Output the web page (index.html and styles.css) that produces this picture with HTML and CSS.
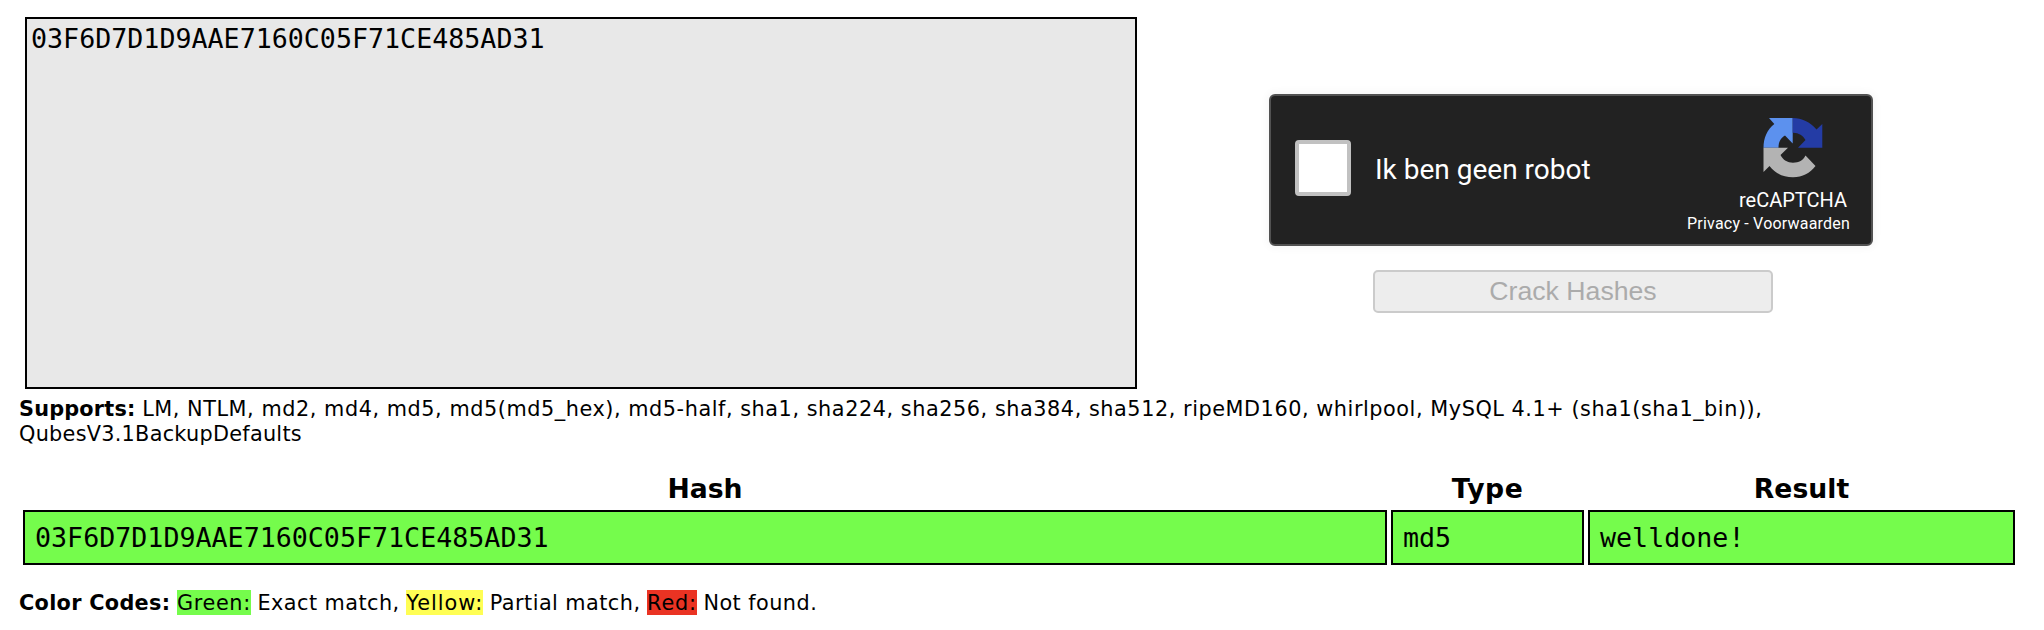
FILE: index.html
```html
<!DOCTYPE html>
<html lang="nl">
<head>
<meta charset="utf-8">
<title>Crack Hashes</title>
<link rel="stylesheet" href="styles.css">
</head>
<body>
<main class="page">
  <section class="entry">
    <div class="hash-input">03F6D7D1D9AAE7160C05F71CE485AD31</div>
    <div class="actions">
      <div class="captcha">
        <span class="checkbox"></span>
        <span class="captcha-label">Ik ben geen robot</span>
        <div class="brand">
          <svg class="logo" viewBox="0 0 60 60" width="60" height="60">
            <path fill="#5c91ee" d="M29.7 0H6l5.300 6C4 12 .5 20 .5 29.700H15.500C15.500 24 17.500 20 22 17.500L29.700 25.500Z"/>
            <path fill="#243ca5" d="M29.700 0C39 0 47 4 53.500 11.500L59.300 6V29.700H35L42.500 22C40 17.500 35.500 14.500 29.700 14.700Z"/>
            <path fill="#b3b3b3" d="M.5 29.700H25L17.500 37C20 42 24.500 44.700 30 44.700 36 44.700 40 42.500 42.500 37.500L52.500 48C47 55 39.500 59.300 30 59.300 20 59.300 12.500 55.500 6.500 48L.5 54Z"/>
          </svg>
          <span class="brand-name">reCAPTCHA</span>
          <span class="brand-links">Privacy - Voorwaarden</span>
        </div>
      </div>
      <button class="crack" disabled>Crack Hashes</button>
    </div>
  </section>
  <p class="supports"><b>Supports:</b> <span class="algorithms">LM, NTLM, md2, md4, md5, md5(md5_hex), md5-half, sha1, sha224, sha256, sha384, sha512, ripeMD160, whirlpool, MySQL 4.1+ (sha1(sha1_bin)),</span><br><span class="backup">QubesV3.1BackupDefaults</span></p>
  <div class="results">
    <div class="head">Hash</div><div class="head type">Type</div><div class="head">Result</div>
    <div class="cell">03F6D7D1D9AAE7160C05F71CE485AD31</div><div class="cell">md5</div><div class="cell">welldone!</div>
  </div>
  <p class="codes"><b>Color Codes:</b> <span class="swatch green">Green:</span> <span class="meaning">Exact match,</span> <span class="swatch yellow">Yellow:</span> <span class="meaning">Partial match,</span> <span class="swatch red">Red:</span> <span class="meaning">Not found.</span></p>
</main>
</body>
</html>
```
FILE: styles.css
```css
* { box-sizing: border-box; }
body { margin: 0; background: #fff; color: #000; font-family: "DejaVu Sans", sans-serif; }
.page { width: 2044px; height: 630px; padding-top: 17px; overflow: hidden; }
.entry { display: flex; margin-left: 25px; height: 372px; }
.hash-input { width: 1112px; border: 2px solid #000; background: #e8e8e8; padding: 4px 4px; font: 26.67px/32px "DejaVu Sans Mono", monospace; }
.actions { width: 604px; margin: 77px 0 0 132px; display: flex; flex-direction: column; align-items: center; gap: 24px; }
.captcha { width: 604px; height: 152px; flex: none; border: 2px solid #525252; border-radius: 6px; background: #222; color: #fff; display: flex; align-items: center; padding-left: 24px; font-family: Roboto, sans-serif; box-shadow: 0 0 8px 2px rgba(0,0,0,.04); }
.checkbox { width: 56px; height: 56px; margin-bottom: 4px; border: 4px solid #c1c1c1; border-radius: 4px; background: #fff; }
.captcha-label { margin-left: 24px; font-size: 28px; line-height: 34px; }
.brand { margin: 0 21px 0 auto; align-self: stretch; display: flex; flex-direction: column; align-items: flex-end; padding-top: 22px; }
.logo { margin-right: 27px; }
.brand-name { margin: 10px 3px 0 0; font-size: 20px; line-height: 24px; }
.brand-links { font-size: 16px; line-height: 20px; margin-top: 2px; letter-spacing: .2px; }
.crack { width: 400px; height: 43px; margin-left: 4px; padding: 0; border: 2px solid #cbcbcb; border-radius: 5px; background: #ededed; color: #ababab; font: 26.67px "Liberation Sans", sans-serif; }
.supports, .codes { margin: 0 0 0 19px; font-size: 20.8px; line-height: 25px; white-space: nowrap; }
.supports { margin-top: 8px; }
.supports b { letter-spacing: .2px; }
.algorithms { letter-spacing: .55px; }
.backup { letter-spacing: .27px; }
.results { margin: 26px 0 0 23px; width: 1992px; display: grid; grid-template-columns: 1364px 193px 427px; column-gap: 4px; }
.head { height: 37px; font-size: 26.67px; line-height: 32px; font-weight: bold; text-align: center; }
.type { letter-spacing: .5px; }
.cell { height: 55px; border: 2px solid #000; background: #75fc4c; padding: 0 10px; font: 26.67px/51px "DejaVu Sans Mono", monospace; }
.codes { margin-top: 26px; }
.codes b { letter-spacing: .3px; }
.meaning { letter-spacing: .45px; }
.swatch { padding-top: 1px; }
.green { background: #75fc4c; letter-spacing: .65px; }
.yellow { background: #fffe54; letter-spacing: 1px; }
.red { background: #ea3323; letter-spacing: .8px; }
```
